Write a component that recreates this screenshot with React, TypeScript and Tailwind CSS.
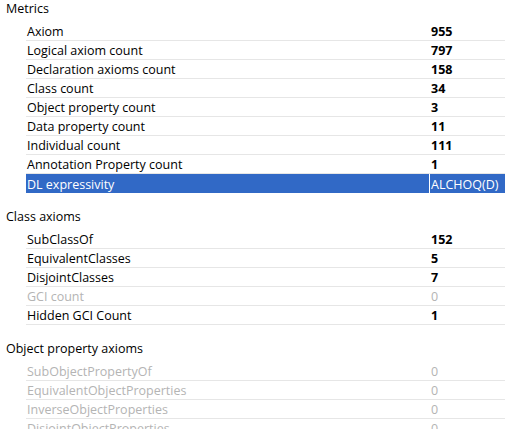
import React from 'react';

interface Row {
    label: string;
    value: string;
    disabled?: boolean;
    selected?: boolean;
}

interface Section {
    title: string;
    rows: Row[];
}

const sections: Section[] = [
    {
        title: 'Metrics',
        rows: [
            { label: 'Axiom', value: '955' },
            { label: 'Logical axiom count', value: '797' },
            { label: 'Declaration axioms count', value: '158' },
            { label: 'Class count', value: '34' },
            { label: 'Object property count', value: '3' },
            { label: 'Data property count', value: '11' },
            { label: 'Individual count', value: '111' },
            { label: 'Annotation Property count', value: '1' },
            { label: 'DL expressivity', value: 'ALCHOQ(D)', selected: true },
        ],
    },
    {
        title: 'Class axioms',
        rows: [
            { label: 'SubClassOf', value: '152' },
            { label: 'EquivalentClasses', value: '5' },
            { label: 'DisjointClasses', value: '7' },
            { label: 'GCI count', value: '0', disabled: true },
            { label: 'Hidden GCI Count', value: '1' },
        ],
    },
    {
        title: 'Object property axioms',
        rows: [
            { label: 'SubObjectPropertyOf', value: '0', disabled: true },
            { label: 'EquivalentObjectProperties', value: '0', disabled: true },
            { label: 'InverseObjectProperties', value: '0', disabled: true },
            { label: 'DisjointObjectProperties', value: '0', disabled: true },
        ],
    },
];

function MetricRow({ row }: { row: Row }) {
    if (row.selected) {
        return (
            <div className="flex h-[19px] bg-[#3169c6] text-white">
                <div className="flex-1 pl-[1px] pt-[2px] leading-[17px] truncate">{row.label}</div>
                <div className="w-[76px] border-l border-white pl-[1px] pt-[2px] leading-[17px]">{row.value}</div>
            </div>
        );
    }
    const labelColor = row.disabled ? 'text-[#b4b4b4]' : 'text-black';
    const valueColor = row.disabled ? 'text-[#b4b4b4] font-normal' : 'text-black font-bold';
    return (
        <div className="flex h-[19px] border-b border-[#e6e6e6]">
            <div className={`flex-1 pl-[1px] pt-[1px] leading-[17px] truncate ${labelColor}`}>{row.label}</div>
            <div className={`w-[76px] pl-[2px] pt-[1px] leading-[17px] ${valueColor}`}>{row.value}</div>
        </div>
    );
}

export default function App() {
    return (
        <div
            className="w-[505px] h-[429px] overflow-hidden bg-white text-[12.5px]"
            style={{ fontFamily: '"Open Sans", sans-serif' }}
        >
            {sections.map((section, i) => (
                <div key={section.title} className={i === 0 ? 'pt-0' : 'pt-[15px]'}>
                    <div className="pl-[6px] h-[22px] leading-[17px] text-black">{section.title}</div>
                    <div className="pl-[26px]">
                        {section.rows.map((row) => (
                            <MetricRow key={row.label} row={row} />
                        ))}
                    </div>
                </div>
            ))}
        </div>
    );
}
